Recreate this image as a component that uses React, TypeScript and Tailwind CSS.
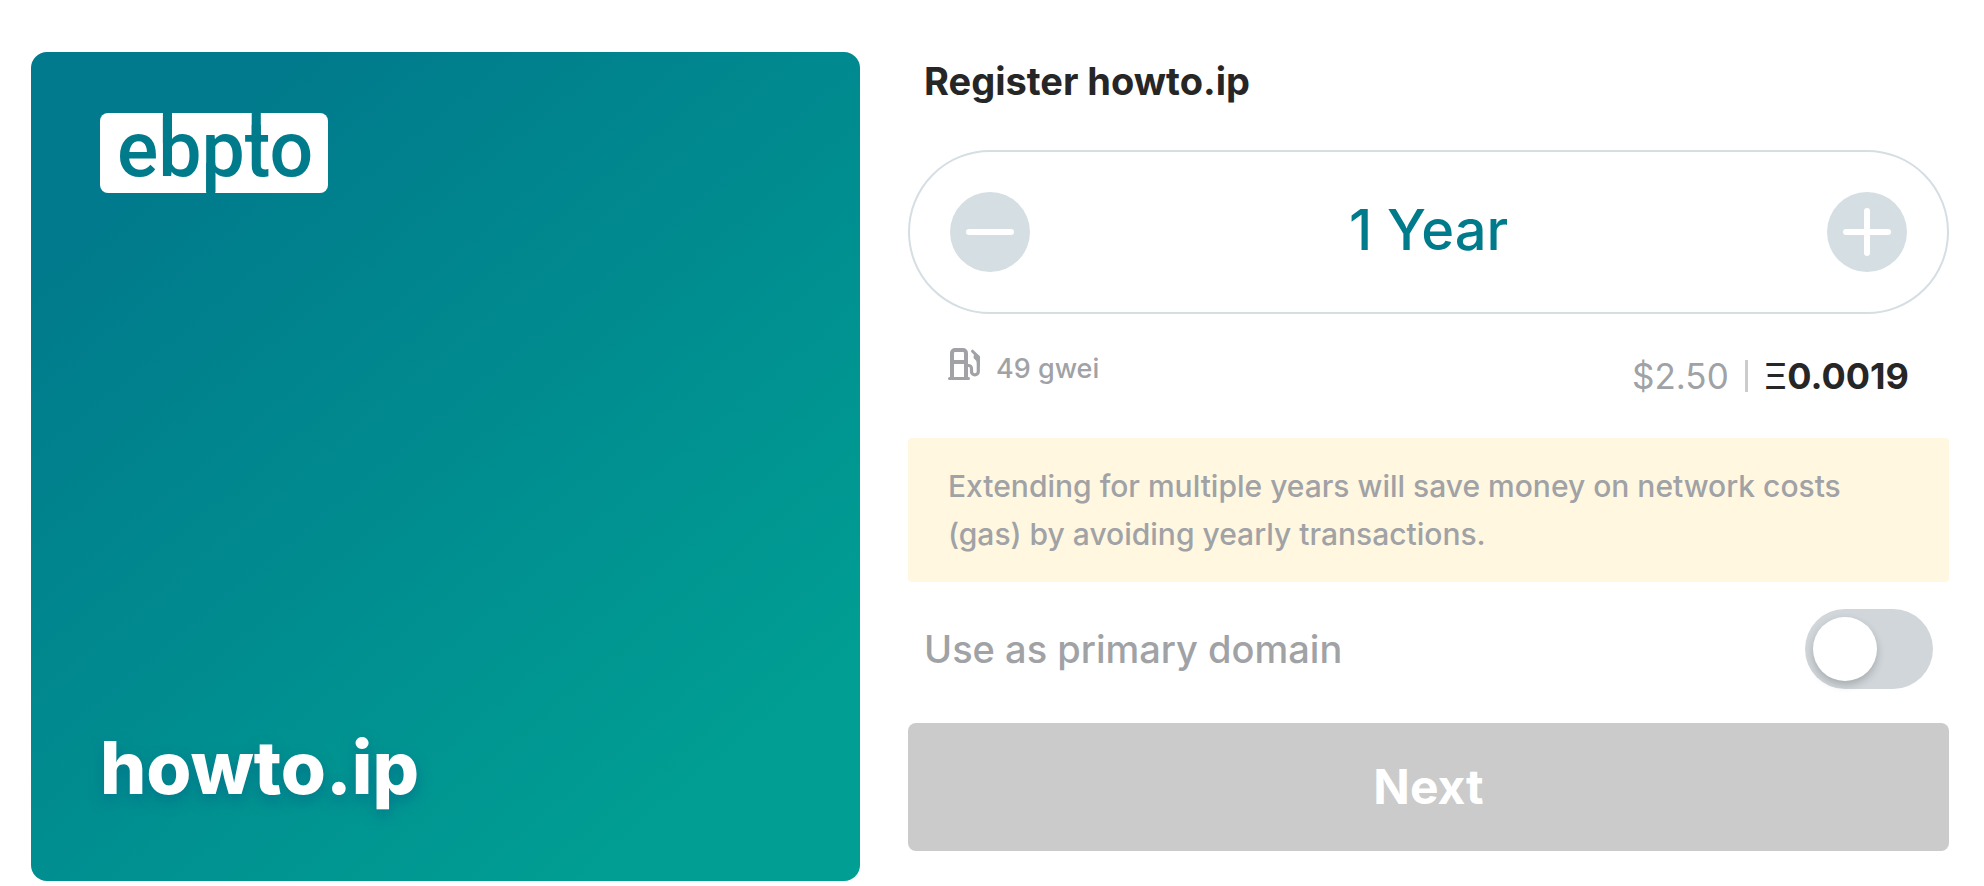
import { useState } from "react";

function Logo() {
  return (
    <svg viewBox="0 0 228 80" className="h-20 w-57 overflow-visible" role="img" aria-label="ebpto">
      <rect width="228" height="80" rx="8" fill="#fff" />
      <g fill="#007b8c">
        <text x="17" y="63" fontFamily="Roboto, sans-serif" fontSize="77" fontWeight="500">
          ebpto
        </text>
        <rect x="62.9" y="0" width="9.1" height="30" />
        <rect x="106.2" y="50" width="9.1" height="30" />
        <rect x="151.7" y="0" width="9.1" height="30" />
      </g>
    </svg>
  );
}

function GasIcon() {
  return (
    <svg viewBox="0 0 32 32" className="size-8 overflow-visible" fill="none" stroke="currentColor" strokeWidth="4" aria-hidden="true">
      <path d="M4 30V5a3 3 0 0 1 3-3h8a3 3 0 0 1 3 3v25M4 14h14" />
      <path d="M1.5 30.5h19" strokeWidth="3" strokeLinecap="round" />
      <path d="M19 17.5h1.5a3 3 0 0 1 3 3v3a3.4 3.4 0 0 0 6.8 0V11" strokeWidth="3.2" />
      <path d="M24.5 3.2L30.4 9v3" strokeWidth="3" strokeLinecap="round" />
      <path d="M26 6l5.9 3v9h-2.5l-.9-5-3-3z" fill="currentColor" stroke="none" />
    </svg>
  );
}

function StepButton({ label, plus, onClick }: { label: string; plus?: boolean; onClick: () => void }) {
  return (
    <button type="button" aria-label={label} onClick={onClick} className="size-20 shrink-0 rounded-full bg-[#d5dee3]">
      <svg viewBox="0 0 80 80" className="size-20" stroke="#fff" strokeWidth="6" strokeLinecap="round" aria-hidden="true">
        <path d="M19 40h42" />
        {plus && <path d="M40 19v42" />}
      </svg>
    </button>
  );
}

export default function App() {
  const [years, setYears] = useState(1);
  const [primary, setPrimary] = useState(false);

  return (
    <main className="grid grid-cols-[829fr_1041fr] items-start gap-12 bg-white pt-13 pr-[35px] pl-[31px] font-['Inter',sans-serif] text-[#a0a2a6]">
      <section className="flex aspect-square flex-col justify-between rounded-2xl bg-[linear-gradient(140deg,#007a8c_14%,#009e93_85%)] px-[69px] pt-[61px] pb-16">
        <Logo />
        <p className="text-[73px] leading-[98px] font-extrabold text-white [text-shadow:0_6px_14px_#00708acc]">
          howto.ip
        </p>
      </section>

      <section className="flex flex-col">
        <h1 className="px-4 pt-0.5 pb-0.5 text-[38px] leading-[54px] font-bold text-[#262626]">Register howto.ip</h1>

        <div className="mt-10 flex items-center justify-between rounded-full border-2 border-[#d5dee3] p-10">
          <StepButton label="Remove a year" onClick={() => setYears(Math.max(1, years - 1))} />
          <output className="pb-1 text-[56px] leading-[76px] font-medium text-[#007b8c]">
            {years} {years === 1 ? "Year" : "Years"}
          </output>
          <StepButton label="Add a year" plus onClick={() => setYears(years + 1)} />
        </div>

        <div className="flex items-start justify-between px-10 pt-[30px]">
          <div className="flex items-start gap-4 pt-1">
            <GasIcon />
            <span className="text-[27px] leading-[42px] font-medium">49 gwei</span>
          </div>
          <div className="flex items-center gap-4 pt-2 text-[36px] leading-[48px]">
            <span className="text-[35px]">$2.50</span>
            <span className="h-8 w-[3px] bg-[#cccccc]" />
            <span className="font-bold text-[#262626]"><span className="font-normal">Ξ</span>0.0019</span>
          </div>
        </div>

        <p className="mt-[38px] rounded bg-[#fff7e0] px-10 py-6 text-[30px] leading-[48px] font-medium">
          Extending for multiple years will save money on network costs (gas) by avoiding yearly transactions.
        </p>

        <div className="mt-[27px] flex items-center justify-between px-4">
          <label htmlFor="primary" className="text-[38px] leading-[80px] font-medium">
            Use as primary domain
          </label>
          <input
            id="primary"
            type="checkbox"
            role="switch"
            checked={primary}
            onChange={(e) => setPrimary(e.target.checked)}
            className="h-20 w-32 shrink-0 appearance-none rounded-full bg-[#d0d6da] p-2 before:block before:size-16 before:rounded-full before:bg-white before:shadow-[0_4px_8px_#00000033] before:content-[''] checked:bg-[#007b8c] checked:before:ml-12"
          />
        </div>

        <button type="button" className="mt-[34px] rounded-lg bg-[#cbcbcb] py-6 text-[48px] leading-[80px] font-bold text-white">
          Next
        </button>
      </section>
    </main>
  );
}
